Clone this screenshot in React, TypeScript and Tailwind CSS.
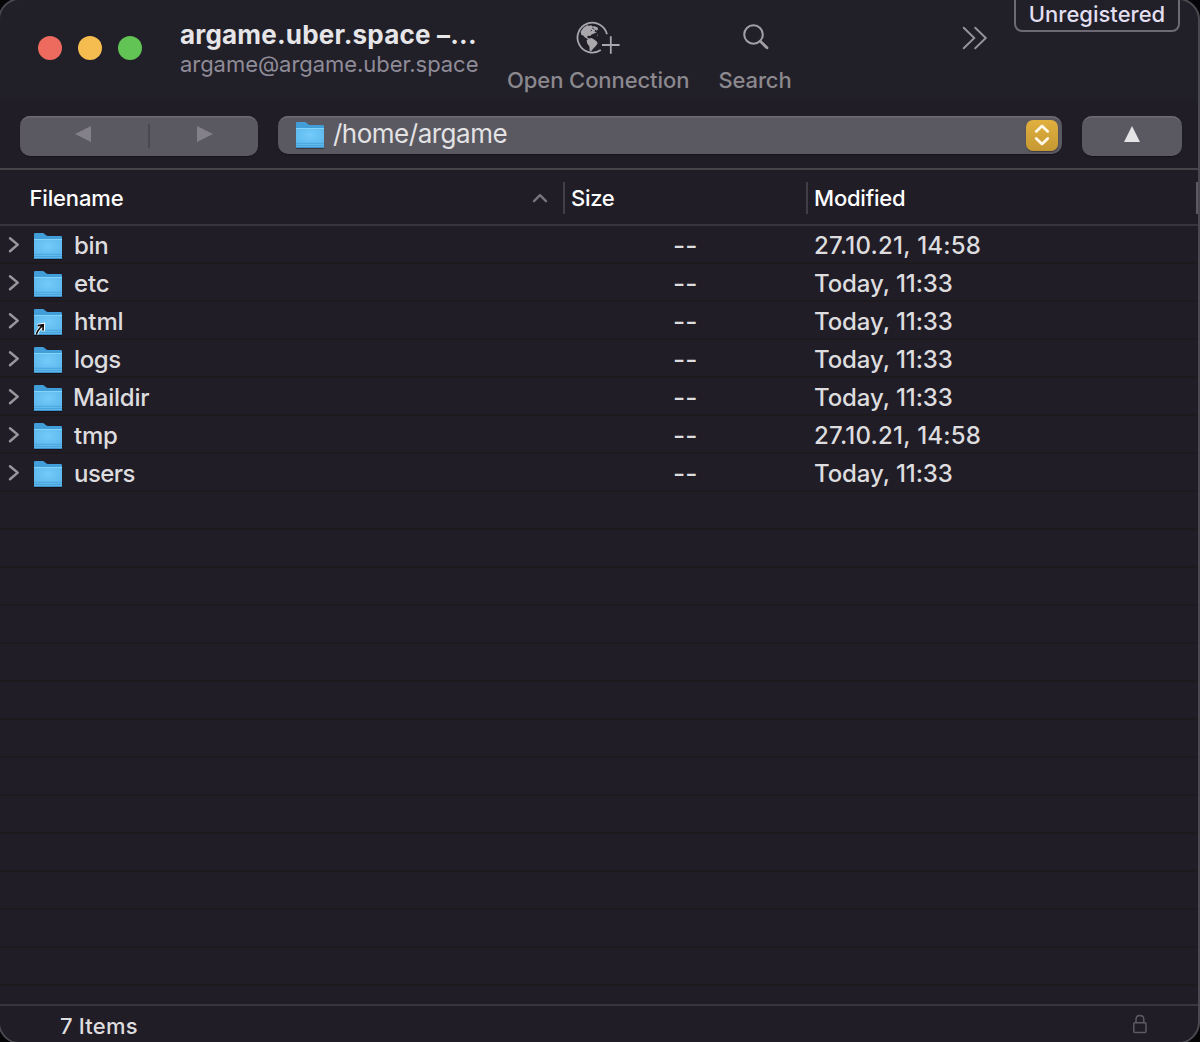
import type { ReactNode } from "react";

type Entry = { name: string; nameClass: string; date: string; link?: boolean };

const entries: Entry[] = [
  { name: "bin", nameClass: "tracking-[-0.3px]", date: "27.10.21, 14:58" },
  { name: "etc", nameClass: "tracking-[-0.1px]", date: "Today, 11:33" },
  { name: "html", nameClass: "tracking-[-0.1px]", date: "Today, 11:33", link: true },
  { name: "logs", nameClass: "tracking-[-0.4px]", date: "Today, 11:33" },
  { name: "Maildir", nameClass: "tracking-[-0.2px] -ml-px", date: "Today, 11:33" },
  { name: "tmp", nameClass: "tracking-[-0.2px]", date: "27.10.21, 14:58" },
  { name: "users", nameClass: "tracking-[-0.55px]", date: "Today, 11:33" },
];

function Folder({ link = false }: { link?: boolean }) {
  return (
    <svg width="30" height="30" viewBox="0 0 30 30" className="block shrink-0">
      <defs>
        <radialGradient id="folderFront" cx="0.5" cy="0.35" r="0.65">
          <stop offset="0" stopColor="#74cbfa" />
          <stop offset="1" stopColor="#5bb7ec" />
        </radialGradient>
      </defs>
      <path d="M1 28.3h28" stroke="#000" strokeOpacity="0.35" strokeWidth="1.4" />
      <path d="M1 3.2Q1 2 2.2 2H9.6Q10.6 2 11.4 2.7L13 4.2Q13.8 5 15 5H27.8Q29 5 29 6.2V12H1Z" fill="#429ed9" />
      <path d="M1 8H29V26.8Q29 28 27.8 28H2.2Q1 28 1 26.8Z" fill="url(#folderFront)" />
      <path d="M1 8.5H29" stroke="#82d4fb" strokeWidth="1" />
      <path d="M1 23.3H29M1 25.5H29" stroke="#459fd8" strokeWidth="0.8" />
      <path d="M1.3 27.5H28.7" stroke="#3d8fc6" strokeWidth="1" />
      {link && (
        <g fill="none" strokeLinejoin="miter">
          <path d="M3.6 27.6Q4.2 23.6 9.6 18.4M4.4 18.6L10.4 17.6L10.2 24.2" stroke="#fff" strokeWidth="3.4" />
          <path d="M3.4 27.6Q4.2 23.4 9.4 18.6M4.6 18.6L10.2 17.8L10 23.6" stroke="#111" strokeWidth="1.7" />
        </g>
      )}
    </svg>
  );
}

function Globe() {
  return (
    <svg width="46" height="34" viewBox="575 21 46 34" className="block" fill="none">
      <path d="M606.9 34.2A14.9 14.9 0 1 0 600.8 49.9" stroke="#a9a7ac" strokeWidth="1.8" />
      <path
        d="M580.6 31.8L583.6 27.6L587.2 25.2L589 25.8L591.2 25.2L592.6 26.4L594.6 26.2L597.6 27.4L598 29.6L596.6 30.8L595.2 29.6L594.6 31.6L596.8 32.2L594 33.6L591.6 34.6L590.2 36L587.6 35.8L587.2 37.4L589.2 38.4L591.6 38L594.2 39.4L597 41.8L597.6 43.6L595.6 46.2L593.4 48.6L591 51.2L589.6 50.6L589.4 46.4L587.2 43.4L586.6 40.6L588 39.2L585 37.6L583.2 35.4L581.4 35Z"
        fill="#a9a7ac"
      />
      <path d="M592 28L594.4 29.2M590.6 31L592 30.2" stroke="#211f28" strokeWidth="0.8" />
      <path d="M597 34.8l1 .6" stroke="#a9a7ac" strokeWidth="0.8" />
      <path d="M602 45H619.6M610.8 36.2V53.8" stroke="#a9a7ac" strokeWidth="1.8" />
    </svg>
  );
}

function ToolbarItem({ label, className, children }: { label: string; className: string; children: ReactNode }) {
  return (
    <div className={className}>
      <div className="flex h-[34px] items-center justify-center">{children}</div>
      <div className="mt-[13px] text-center leading-6">{label}</div>
    </div>
  );
}

const control = "rounded-[10px] bg-[#5a5860] shadow-[inset_0_2px_0_-0.5px_#6d6b72,0_1px_1px_rgba(0,0,0,0.35)]";

export default function App() {
  return (
    <div className="relative h-[1042px] w-[1200px] overflow-hidden bg-[#050507] font-['Inter',sans-serif] whitespace-nowrap">
      <div className="flex h-full w-full flex-col overflow-hidden rounded-[20px] bg-[#211d27]">
        <header className="flex h-[100px] shrink-0 bg-[#211f28]">
          <div className="flex h-24 gap-4 pl-[38px]">
            <div className="mt-9 h-6 w-6 rounded-full bg-[#ed6a5f]" />
            <div className="mt-9 h-6 w-6 rounded-full bg-[#f5bd4f]" />
            <div className="mt-9 h-6 w-6 rounded-full bg-[#61c454]" />
          </div>
          <div className="ml-[38px] w-[327px] pt-5">
            <div className="text-[26px] leading-[30px] font-bold tracking-[0.2px] text-[#e6e5e7]">argame.uber.space –...</div>
            <div className="text-[22px] leading-7 tracking-[-0.05px] text-[#8f8c98]">argame@argame.uber.space</div>
          </div>
          <div className="flex pt-[21px] text-[22px] font-medium text-[#8b898e]">
            <ToolbarItem label="Open Connection" className="w-[182px] tracking-[-0.08px]">
              <Globe />
            </ToolbarItem>
            <ToolbarItem label="Search" className="ml-[29px] w-[74px] tracking-[-0.15px]">
              <svg width="30" height="30" viewBox="740 21 30 30" fill="none" stroke="#a3a1a6" className="-mt-1 block">
                <circle cx="753.5" cy="34.5" r="9.3" strokeWidth="2" />
                <path d="M760.3 41.3L767 47.8" strokeWidth="2.8" strokeLinecap="round" />
              </svg>
            </ToolbarItem>
          </div>
          <svg width="28" height="26" viewBox="961 25 28 26" fill="none" stroke="#97959b" strokeWidth="1.9" strokeLinecap="round" className="mt-[25px] ml-[169px] block">
            <path d="M963.7 27.7L974.3 38L963.7 48.3M975.2 27.7L985.8 38L975.2 48.3" />
          </svg>
          <div className="-mt-2 ml-[25px] h-10 w-[166px] rounded-[8px] border-2 border-[#6d6a76] pt-2 text-center text-[22px] leading-6 font-medium text-[#e2dff0]">
            Unregistered
          </div>
        </header>

        <div className="flex h-[70px] shrink-0 gap-5 border-b-2 border-[#464448] pt-4 pl-5">
          <div className={`flex h-10 w-[238px] ${control}`}>
            <div className="flex w-32 pt-[10px] pl-[55px]">
              <svg width="16" height="16" viewBox="0 0 16 16" fill="#838088"><path d="M0 8L16 0V16Z" /></svg>
            </div>
            <div className="mt-2 h-6 w-[2px] bg-[#4a484e]" />
            <div className="pt-[10px] pl-[47px]">
              <svg width="16" height="16" viewBox="0 0 16 16" fill="#838088"><path d="M16 8L0 0V16Z" /></svg>
            </div>
          </div>
          <div className={`flex h-[38px] w-[784px] pl-[17px] ${control}`}>
            <div className="pt-1"><Folder /></div>
            <div className="ml-2 pt-px text-[26px] leading-[34px] tracking-[-0.5px] text-[#e3e2e4]">/home/argame</div>
            <div className="mt-1 mr-1 ml-auto flex h-[31px] w-8 items-center justify-center rounded-[7px] bg-gradient-to-b from-[#e0b03f] to-[#c69833] shadow-[0_1px_1px_rgba(0,0,0,0.35)]">
              <svg width="20" height="24" viewBox="0 0 20 24" fill="none" stroke="#fff8e6" strokeWidth="2.8" strokeLinecap="round" strokeLinejoin="round" className="-mt-px">
                <path d="M4.2 8.4L10 2.9L15.8 8.4M4.2 15.4L10 20.9L15.8 15.4" />
              </svg>
            </div>
          </div>
          <div className={`flex h-10 w-[100px] justify-center pt-[10px] ${control}`}>
            <svg width="16" height="16" viewBox="0 0 16 16" fill="#e4e3e5"><path d="M8 0L16 16H0Z" /></svg>
          </div>
        </div>

        <div className="flex h-[56px] shrink-0 border-b-2 border-[#37343e] pt-3 text-[22px] leading-8 font-[550] text-white">
          <div className="flex w-[563px] pl-[29.5px] tracking-[-0.15px]">
            Filename
            <svg width="18" height="12" viewBox="0 0 18 12" fill="none" stroke="#77747e" strokeWidth="2.4" strokeLinecap="round" strokeLinejoin="round" className="mt-[10px] mr-[14px] ml-auto">
              <path d="M3 9.2L9 3.2L15 9.2" />
            </svg>
          </div>
          <div className="h-8 w-[2px] bg-[#403e47]" />
          <div className="w-[241px] pl-[6px] tracking-[-0.3px]">Size</div>
          <div className="h-8 w-[2px] bg-[#403e47]" />
          <div className="w-[388px] pl-[6px] tracking-[-0.2px]">Modified</div>
          <div className="h-8 w-[2px] bg-[#5c5961]" />
        </div>

        <div className="h-[778px] shrink-0 text-[24px] font-[450] text-[#dddcdf]">
          {entries.map((e) => (
            <div key={e.name} className="flex h-[38px] border-b-2 border-[#1c1a1d] leading-[39px]">
              <svg width="34" height="36" viewBox="0 0 34 36" fill="none" stroke="#99979b" strokeWidth="2.5" strokeLinecap="round" strokeLinejoin="round" className="-mr-px block">
                <path d="M10 12.2L17.7 18.6L10 25.2" />
              </svg>
              <div className="pt-[5px]"><Folder link={e.link} /></div>
              <div className="w-[610px] pl-[11px]"><span className={`inline-block ${e.nameClass}`}>{e.name}</span></div>
              <div className="w-[141px]"><span className="inline-block origin-left scale-x-110">--</span></div>
              <div className={e.date.startsWith("T") ? "tracking-[-0.1px]" : "tracking-[0.22px]"}>{e.date}</div>
            </div>
          ))}
          {Array.from({ length: 13 }, (_, i) => (
            <div key={i} className="h-[38px] border-b-2 border-[#1c1a1d]" />
          ))}
        </div>

        <footer className="flex h-[38px] shrink-0 justify-between border-t-2 border-[#38363a] pr-[52px] pl-[60px] text-[22px] leading-[40px] font-[450] tracking-[0.2px] text-[#dddcdf]">
          7 Items
          <svg width="16" height="22" viewBox="0 0 16 22" fill="none" stroke="#5d5a64" strokeWidth="1.5" className="mt-2 block">
            <rect x="1.8" y="8.8" width="12.2" height="9.8" rx="1" />
            <path d="M4 8.8V5.4Q4 1.4 7.9 1.4Q11.8 1.4 11.8 5.4V8.8" />
          </svg>
        </footer>
      </div>
      <div className="pointer-events-none absolute -top-[2px] right-0 -bottom-[2px] -left-[2px] rounded-[22px] border-2 border-[#4b4950]" />
    </div>
  );
}
